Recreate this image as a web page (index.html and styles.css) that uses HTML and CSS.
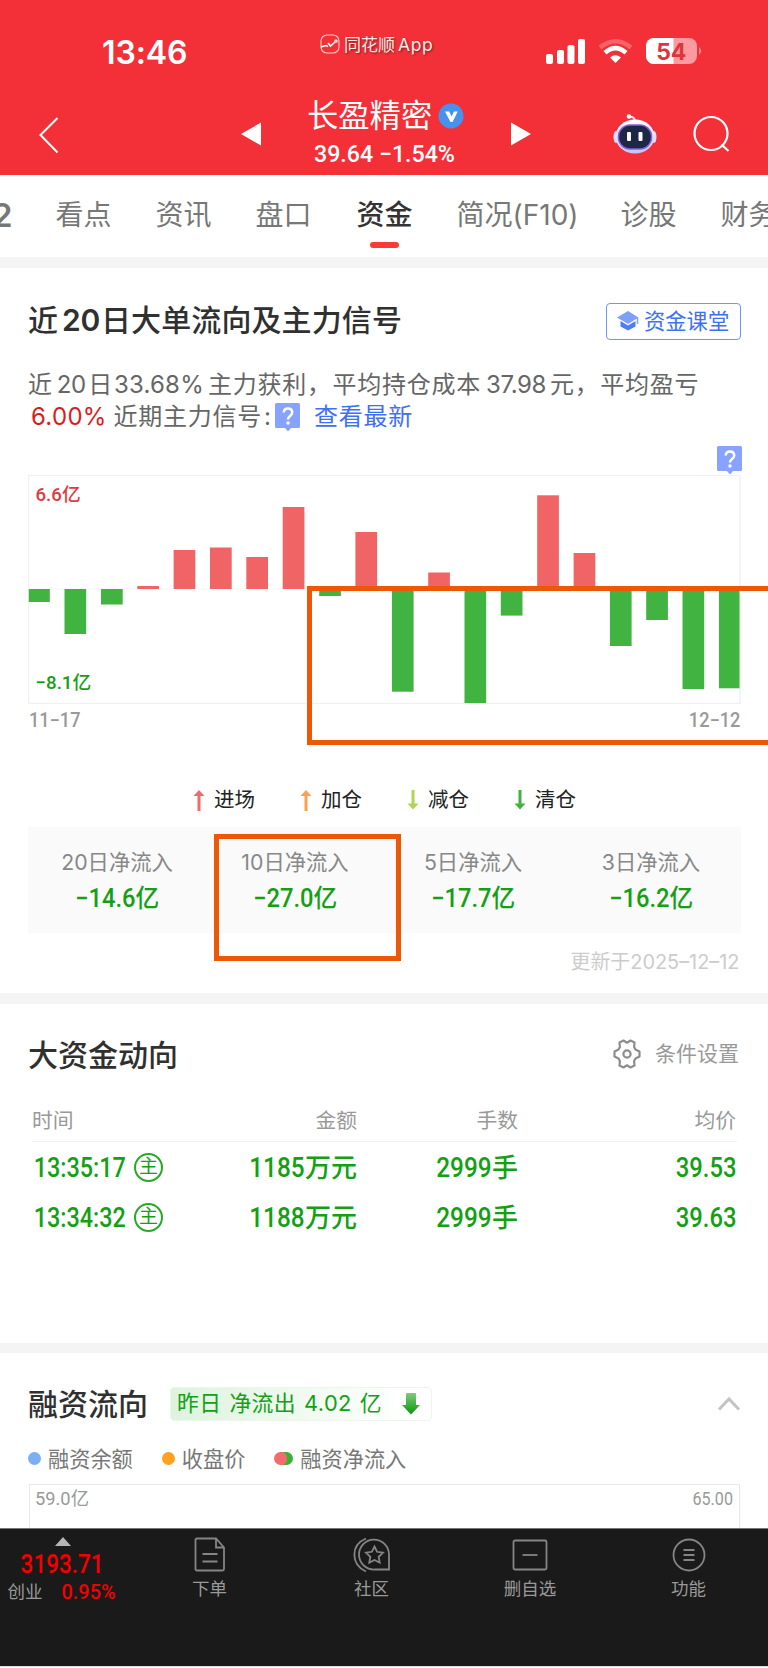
FILE: index.html
```html
<!DOCTYPE html>
<html lang="zh-CN">
<head>
<meta charset="utf-8">
<title>长盈精密 资金</title>
<link rel="stylesheet" href="styles.css">
</head>
<body>
<div class="app">
<header class="top">
  <div class="status">
    <span class="clock">13:46</span>
    <span class="brand">
      <svg width="20" height="20" viewBox="0 0 20 20" fill="none" stroke="#ffc9c4" stroke-width="1.1"><rect x="1" y="1" width="18" height="18" rx="6"/><path d="M1 13l5-1.500 2 1M8 9l2.500 3 4.500-4" stroke="#fff" stroke-width="1.600"/><circle cx="16" cy="7" r="1.300" fill="#fff"/></svg>
      <span class="brand-name">同花顺<span class="brand-app">App</span></span>
    </span>
    <span class="signals">
      <svg width="160" height="30" viewBox="0 0 160 30">
        <g fill="#fff"><rect x="0" y="17" width="7" height="10" rx="2"/><rect x="11" y="13" width="7" height="14" rx="2"/><rect x="21.500" y="8" width="7" height="19" rx="2"/><rect x="32" y="2" width="7" height="25" rx="2"/></g>
        <g fill="none" stroke="#fff" stroke-width="4.500"><path d="M54 10.500Q69.500-2 85 10.500" opacity=".25"/><path d="M59 15.800Q69.500 6.500 80 15.800"/></g>
        <path d="M64 20.500q5.500-4.500 11 0L69.500 26z" fill="#fff"/>
        <rect x="100" y="1" width="51" height="26" rx="8" fill="#fb9a9f"/>
        <path d="M108 1h19.500v26H108a8 8 0 0 1-8-8V9a8 8 0 0 1 8-8z" fill="#fff"/>
        <path d="M153 10q4.500 4 0 8z" fill="#fb8086"/>
        <text x="125.300" y="22.500" text-anchor="middle" class="battery-level">54</text>
      </svg>
    </span>
  </div>
  <div class="nav">
    <svg class="nav-back" width="20" height="38" viewBox="0 0 20 38" fill="none" stroke="#fff" stroke-width="2"><path d="M18.500 2L1.500 19l17 17.500"/></svg>
    <svg class="nav-prev" width="20" height="24" viewBox="0 0 20 24"><path d="M20 .500v23L0 12z" fill="#fff"/></svg>
    <div class="stock">
      <div class="stock-name"><span>长盈精密</span><svg width="26" height="26" viewBox="0 0 26 26"><circle cx="13" cy="13" r="12.500" fill="#4692ef"/><path d="M7 8.500h4.200l2.300 5 2.500-5h3.800L14.500 19h-2z" fill="#fff"/></svg></div>
      <div class="stock-quote"><span>39.64</span><span>−1.54%</span></div>
    </div>
    <svg class="nav-next" width="20" height="24" viewBox="0 0 20 24"><path d="M0 .500v23L20 12z" fill="#fff"/></svg>
    <svg class="nav-robot" width="44" height="40" viewBox="0 0 44 40">
      <defs><linearGradient id="shell" x1="0" y1="0" x2="0" y2="1"><stop offset="0" stop-color="#fff"/><stop offset="1" stop-color="#c5c4f2"/></linearGradient></defs>
      <path d="M16 2.500q6 0 6 5" fill="none" stroke="#f6dfe9" stroke-width="2"/><circle cx="16" cy="2.500" r="2.300" fill="#fff"/>
      <ellipse cx="3" cy="23" rx="2.500" ry="6" fill="#e0defb"/><ellipse cx="41" cy="23" rx="2.500" ry="6" fill="#e0defb"/>
      <ellipse cx="22" cy="22.500" rx="19.500" ry="17" fill="url(#shell)"/>
      <rect x="5.500" y="11" width="33" height="24" rx="11.500" fill="#1d2748" stroke="#8462d5" stroke-width="1.500"/>
      <rect x="14" y="18" width="4" height="9" rx="1" fill="#fff"/><rect x="25.500" y="18" width="4" height="9" rx="1" fill="#fff"/>
    </svg>
    <svg class="nav-search" width="38" height="38" viewBox="0 0 38 38" fill="none" stroke="#fff" stroke-width="2.200"><circle cx="18" cy="18.500" r="16.500"/><path d="M28.500 29.500l7 6.500"/></svg>
  </div>
</header>

<nav class="tabs">
  <span class="tab tab-cut">2</span><span class="tab">看点</span><span class="tab">资讯</span><span class="tab">盘口</span><span class="tab tab-on">资金</span><span class="tab">简况(F10)</span><span class="tab">诊股</span><span class="tab">财务</span>
</nav>

<section class="flow">
  <div class="head">
    <h2 class="flow-title">近<span class="num">20</span>日大单流向及主力信号</h2>
    <a class="lesson"><svg width="22" height="20" viewBox="0 0 22 20"><path d="M11 0L21.500 6.500 11 13 0 6.500z" fill="#7fa0fa"/><path d="M3.500 10l7.500 4.500 7.500-4.500v5.500L11 19.500 3.500 15.500z" fill="#4c7cf6"/><path d="M20.500 7v6" stroke="#7fa0fa" stroke-width="1.500"/></svg><span>资金课堂</span></a>
  </div>
  <div class="summary">
    <div class="summary-a">近<span class="num">20</span>日<span class="num2">33.68%</span>主力获利，<span class="clause">平均持仓成本</span><span class="num3">37.98</span>元，<span class="clause">平均盈亏</span></div>
    <div class="summary-b"><b class="gain">6.00%</b><span class="recent">近期主力信号</span><span class="colon">:</span><svg class="help" width="26" height="29" viewBox="0 0 26 29"><path d="M1.500 0h22q1.500 0 1.500 1.500v22q0 1.500-1.500 1.500H16l-3 3.500-3-3.500H1.500Q0 25 0 23.500v-22Q0 0 1.500 0z" fill="#87a3ff"/><path d="M8.700 9.500q.3-4 4.300-4t4.200 3.700q0 2-2.200 3.800-2 1.500-2 3.500" fill="none" stroke="#fff" stroke-width="2.500"/><circle cx="13" cy="20" r="1.700" fill="#fff"/></svg><a class="latest">查看最新</a></div>
  </div>
  <div class="chart-help"><svg width="26" height="29" viewBox="0 0 26 29"><path d="M1.500 0h22q1.500 0 1.500 1.500v22q0 1.500-1.500 1.500H16l-3 3.500-3-3.500H1.500Q0 25 0 23.500v-22Q0 0 1.500 0z" fill="#87a3ff"/><path d="M8.700 9.500q.3-4 4.300-4t4.200 3.700q0 2-2.200 3.800-2 1.500-2 3.500" fill="none" stroke="#fff" stroke-width="2.500"/><circle cx="13" cy="20" r="1.700" fill="#fff"/></svg></div>
  <div class="chart">
    <svg width="713" height="229" viewBox="0 0 713 229">
      <path d="M.500.500h711.500v228H.500z" fill="none" stroke="#f1f1f1" stroke-width="1.500"/>
      <path d="M0 114h712" stroke="#f5f5f5"/>
      <g fill="#f06466"><rect x="109.300" y="111" width="21.700" height="3"/><rect x="145.600" y="75" width="21.700" height="39"/><rect x="182" y="72.500" width="21.700" height="41.500"/><rect x="218.300" y="82" width="21.700" height="32"/><rect x="254.700" y="32" width="21.700" height="82"/><rect x="327.400" y="57" width="21.700" height="57"/><rect x="400.200" y="97.500" width="21.700" height="16.500"/><rect x="509.200" y="20.300" width="21.700" height="93.700"/><rect x="545.600" y="78" width="21.700" height="36"/></g>
      <g fill="#41b341"><rect x=".800" y="114" width="21" height="13"/><rect x="36.500" y="114" width="21.700" height="45"/><rect x="73" y="114" width="21.700" height="15.500"/><rect x="291.200" y="114" width="21.700" height="7"/><rect x="363.900" y="114" width="21.700" height="102.700"/><rect x="436.500" y="114" width="21.700" height="114"/><rect x="472.800" y="114" width="21.700" height="26.600"/><rect x="581.900" y="114" width="21.700" height="57"/><rect x="618.200" y="114" width="21.700" height="31"/><rect x="654.500" y="114" width="21.700" height="100"/><rect x="691" y="114" width="20.500" height="99.300"/></g>
    </svg>
    <span class="axis axis-max">6.6亿</span>
    <span class="axis axis-min"><i>−</i>8.1亿</span>
    <div class="mark mark-recent"></div>
  </div>
  <div class="dates"><span>11<i>−</i>17</span><span>12<i>−</i>12</span></div>
  <div class="legend">
    <span class="legend-item"><svg width="12" height="21" viewBox="0 0 12 21" fill="#f36a6a"><path d="M6 0l5.500 6h-4v15h-3V6h-4z"/></svg>进场</span>
    <span class="legend-item"><svg width="12" height="21" viewBox="0 0 12 21" fill="#ffa04d"><path d="M6 0l5.500 6h-4v15h-3V6h-4z"/></svg>加仓</span>
    <span class="legend-item"><svg width="12" height="21" viewBox="0 0 12 21" fill="#b4d354"><path d="M6 19.500l5.500-6h-4V0h-3v13.500h-4z"/></svg>减仓</span>
    <span class="legend-item"><svg width="12" height="21" viewBox="0 0 12 21" fill="#44b041"><path d="M6 19.500l5.500-6h-4V0h-3v13.500h-4z"/></svg>清仓</span>
  </div>
  <div class="inflow">
    <div class="inflow-cell"><span class="inflow-label">20日净流入</span><span class="inflow-value"><i>−</i>14.6亿</span></div>
    <div class="inflow-cell"><span class="inflow-label">10日净流入</span><span class="inflow-value"><i>−</i>27.0亿</span></div>
    <div class="inflow-cell"><span class="inflow-label">5日净流入</span><span class="inflow-value"><i>−</i>17.7亿</span></div>
    <div class="inflow-cell"><span class="inflow-label">3日净流入</span><span class="inflow-value"><i>−</i>16.2亿</span></div>
    <div class="mark mark-ten"></div>
  </div>
  <div class="updated">更新于2025–12–12</div>
</section>

<section class="big">
  <div class="head head-big">
    <h2>大资金动向</h2>
    <span class="settings"><svg width="30" height="30" viewBox="0 0 30 30" fill="none" stroke="#8c8c8c" stroke-width="2.200" stroke-linejoin="round"><path transform="rotate(90 15 15)" d="M12.500 2.500h5l2 4 2.500 1.400 4.500-.4 2 4L26.300 15l2.200 3.500-2 4-4.500-.4-2.500 1.400-2 4h-5l-2-4L8 22.100l-4.500.4-2-4L3.700 15 1.500 11.500l2-4 4.500.4 2.500-1.400z"/><circle cx="15" cy="15" r="3.600"/></svg>条件设置</span>
  </div>
  <div class="trades">
    <div class="row row-head"><span>时间</span><span>金额</span><span>手数</span><span>均价</span></div>
    <div class="row"><span class="time"><b>13:35:17</b><em>主</em></span><span><b>1185</b>万元</span><span><b>2999</b>手</span><span class="price"><b>39.53</b></span></div>
    <div class="row"><span class="time"><b>13:34:32</b><em>主</em></span><span><b>1188</b>万元</span><span><b>2999</b>手</span><span class="price"><b>39.63</b></span></div>
  </div>
</section>

<section class="margin">
  <div class="head head-margin">
    <h2>融资流向</h2>
    <span class="outflow"><span class="outflow-text">昨日 净流出 4.02 亿</span><svg width="18" height="22" viewBox="0 0 18 22"><defs><linearGradient id="down" x1="0" y1="0" x2="0" y2="1"><stop offset="0" stop-color="#7fca7f"/><stop offset="1" stop-color="#069906"/></linearGradient></defs><path d="M5 0h8q1 0 1 1v11h4l-9 9.500L0 12h4V1q0-1 1-1z" fill="url(#down)"/></svg></span>
    <svg class="collapse" width="24" height="15" viewBox="0 0 24 15" fill="none" stroke="#c4c4c4" stroke-width="3"><path d="M2 13.500L12 3l10 10.500"/></svg>
  </div>
  <div class="keys">
    <span class="key"><i class="dot blue"></i>融资余额</span>
    <span class="key"><i class="dot orange"></i>收盘价</span>
    <span class="key"><i class="dot pair"></i>融资净流入</span>
  </div>
  <div class="margin-chart"><span>59.0亿</span><span class="right-max">65.00</span></div>
</section>

<footer class="bar">
  <div class="index">
    <svg width="16" height="9" viewBox="0 0 16 9"><path d="M8 0l8 9H0z" fill="#b5b5b5"/></svg>
    <span class="index-value">3193.71</span>
    <span class="index-line"><span>创业</span><b>0.95%</b></span>
  </div>
  <div class="bar-item"><svg width="32" height="36" viewBox="0 0 32 36"><path d="M3 1.500h19l8 9V32q0 1.500-1.500 1.500H3Q1.500 33.500 1.500 32V3Q1.500 1.500 3 1.500zM22 1.500v9h8M8.500 17h15M8.500 24.500h15"/></svg><span>下单</span></div>
  <div class="bar-item"><svg width="38" height="36" viewBox="0 0 38 36"><path d="M36 32.500H22A15 15 0 1 1 36 17.500zM13 1.500C-2.500 8-2.500 27 13 34.500M21.500 9.500l2.600 5.300 5.900.9-4.300 4.200 1 5.800-5.200-2.800-5.200 2.800 1-5.800-4.300-4.200 5.900-.9z"/></svg><span>社区</span></div>
  <div class="bar-item"><svg width="36" height="36" viewBox="0 0 36 36"><rect x="1.500" y="3.500" width="33" height="29" rx="1.500"/><path d="M10.500 18h15"/></svg><span>删自选</span></div>
  <div class="bar-item"><svg width="34" height="36" viewBox="0 0 34 36"><circle cx="17" cy="18" r="15.500"/><path d="M11.500 13h11M11.500 18h11M11.500 23h11"/></svg><span>功能</span></div>
</footer>
</div>
</body>
</html>
```
FILE: styles.css
```css
* { box-sizing: border-box; }
body {
  margin: 0;
  background: #fff;
  font-family: Inter, "Noto Sans CJK SC", sans-serif;
  color: #333;
}
svg { display: block; flex: none; }
i, em { font-style: normal; }
h2 { margin: 0; font-size: 30px; font-weight: 500; line-height: 36px; color: #303030; }
.app { width: 768px; height: 1668px; overflow: hidden; display: flex; flex-direction: column; }
.app > * { flex: none; }

/* header */
.top { height: 174.500px; background: #f33038; color: #fff; }
.status { height: 92px; display: grid; grid-template-columns: 102px 218px 226px 1fr; align-items: start; }
.clock { grid-column: 2; margin-top: 33px; font-size: 32px; font-weight: 600; line-height: 39px; letter-spacing: -.1px; }
.brand { display: flex; gap: 4px; margin-top: 34px; }
.brand-name { font-size: 17px; line-height: 22px; color: #ffe9e7; text-shadow: 1px 1px 2px #7c1d1d; white-space: nowrap; }
.brand-app { margin-left: 3px; letter-spacing: .6px; font-size: 17.500px; }
.signals { margin-top: 37px; }
.battery-level { font: 700 23px Inter, sans-serif; fill: #e0343c; }
.nav { height: 82px; display: grid; grid-template-columns: 39px 202px 66px 204px 102px 80px 1fr; align-items: start; }
.nav-back { grid-column: 2; margin-top: 24px; }
.nav-prev, .nav-next { margin-top: 30px; }
.nav-robot { margin-top: 22px; }
.nav-search { margin-top: 23px; }
.stock-name { display: flex; gap: 5.500px; align-items: center; height: 48px; font-size: 31.300px; line-height: 48px; white-space: nowrap; }
.stock-quote { display: flex; gap: 6px; margin-left: 7px; font: 500 24px/28px Roboto, sans-serif; transform: scaleX(.965); transform-origin: 0 50%; }

/* tabs */
.tabs { height: 93.500px; border-bottom: 11px solid #f4f4f4; padding-top: 21.500px; display: grid; grid-template-columns: 55.500px 100px 100px 101px 100px 164px 100px 47.500px; }
.tab { font-size: 28px; line-height: 38px; color: #777; white-space: nowrap; }
.tab-cut { font-size: 33px; font-weight: 600; margin-left: -8px; }
.tab-on { color: #333; font-weight: 500; position: relative; }
.tab-on::after { content: ""; position: absolute; left: 13.500px; top: 46px; width: 29px; height: 6px; border-radius: 3px; background: #fa3a33; }

/* large order flow */
.flow { height: 735.500px; border-bottom: 11px solid #f4f4f4; padding: 33px 27px 0 28px; }
.head { display: flex; justify-content: space-between; align-items: center; height: 38px; }
.flow-title { white-space: nowrap; letter-spacing: .1px; }
.flow-title .num { margin: 0 1px 0 4px; font-weight: 600; letter-spacing: -.3px; }
.lesson { display: flex; align-items: center; gap: 5px; width: 135px; height: 37px; margin-top: 2px; padding-left: 10px; border: 1.500px solid #7095ff; border-radius: 4px; font-size: 21.300px; line-height: 32px; color: #3e70f5; white-space: nowrap; }
.lesson span { margin-top: -1px; }
.summary { margin-top: 29px; color: #666; font-size: 24px; line-height: 32px; letter-spacing: .75px; white-space: nowrap; }
.summary .num { margin: 0 2.500px 0 4px; letter-spacing: -.4px; }
.summary .num2 { margin: 0 4px 0 1px; letter-spacing: .2px; }
.summary .num3 { margin: 0 4px 0 5px; letter-spacing: -.4px; }
.clause { margin-left: .900px; }
.summary-a { height: 33px; line-height: 33px; }
.summary-b { height: 32px; display: flex; align-items: center; }
.gain { width: 85.500px; padding-left: 3px; font-weight: 400; color: #d71d22; letter-spacing: .3px; }
.recent { width: 150.500px; }
.colon { width: 11px; }
.latest { margin-left: 13px; color: #3e70f5; }
.chart-help { display: flex; justify-content: flex-end; height: 29px; margin: 13px -2px 0 0; }
.chart { position: relative; height: 229px; }
.axis { position: absolute; left: 7.500px; font: 500 18.700px/22px Roboto, "Noto Sans CJK SC", sans-serif; }
.axis-max { top: 9px; color: #e4393c; }
.axis-min { top: 197px; color: #14a014; }
.mark { position: absolute; border: 5px solid #ec5807; }
.mark-recent { left: 279px; top: 110.500px; width: 480px; height: 159px; border-right: 0; }
.dates { display: flex; justify-content: space-between; margin: 4px 1px 0; height: 25px; font: 500 19.500px/26px Roboto, sans-serif; color: #999; }
.dates span { transform: scaleX(.93); transform-origin: 0 50%; }
.dates span:last-child { transform-origin: 100% 50%; }
.legend { display: flex; gap: 45px; height: 32px; margin: 51px 0 0 165px; font-size: 20.500px; line-height: 32px; }
.legend-item { display: flex; align-items: center; gap: 9px; color: #222; white-space: nowrap; }
.inflow { position: relative; display: grid; grid-template-columns: repeat(4, 178px); height: 106px; margin-top: 11px; background: #fafafa; }
.inflow-cell { display: flex; flex-direction: column; align-items: center; padding-top: 21px; }
.inflow-label { font-size: 21.300px; line-height: 28px; color: #888; }
.inflow-value { margin-top: 6px; font: 500 25.500px/32px Roboto, "Noto Sans CJK SC", sans-serif; color: #14a014; transform: scaleX(.93); }
.mark-ten { left: 186px; top: 7px; width: 186.500px; height: 127px; }
.updated { margin-top: 15px; text-align: right; font-size: 19.900px; line-height: 28px; color: #ccc; padding-right: 1.500px; }

/* big money */
.big { height: 349px; border-bottom: 10px solid #f4f4f4; padding: 32px 27px 0 28px; }
.settings { display: flex; align-items: center; gap: 13px; font-size: 21px; line-height: 30px; color: #999; padding-right: 2px; margin-top: -1px; }
.trades { margin: 30px 4px 0 4px; }
.row { display: grid; grid-template-columns: 160px 165px 161px 218px; height: 50px; line-height: 51px; font-family: Roboto, "Noto Sans CJK SC", sans-serif; font-size: 26px; font-weight: 500; color: #14a014; white-space: nowrap; }
.row > span { text-align: right; }
.row > .time, .row > span:first-child { text-align: left; }
.row b { display: inline-block; font-weight: 500; font-size: 28px; transform: scaleX(.87); transform-origin: 100% 50%; }
.row .price b { transform: scaleX(.85); }
.row-head { height: 38px; line-height: 26px; border-bottom: 1.500px solid #f2f2f2; padding-top: 4px; font-size: 20.800px; font-weight: 400; color: #999; }
.time { display: flex; align-items: center; }
.row .time b { width: 102px; transform: scaleX(.835); transform-origin: 0 50%; padding-left: 2px; }
.time em { width: 29px; height: 29px; border: 2px solid #28a828; border-radius: 50%; font-size: 19px; line-height: 24px; text-align: center; font-weight: 400; }

/* margin financing */
.margin { height: 175px; padding: 32px 27px 0 28px; overflow: hidden; }
.head-margin { justify-content: flex-start; }
.outflow { display: flex; align-items: center; justify-content: space-between; width: 262px; height: 34px; margin-left: 22px; padding: 0 11px 0 6px; border: 1px solid #ecf7ec; border-radius: 4px; background: linear-gradient(90deg, #def3de, #fff 90%); color: #14a014; font-size: 21.800px; line-height: 30px; letter-spacing: .4px; word-spacing: 1.500px; white-space: nowrap; }
.outflow-text { margin-top: -1px; }
.collapse { margin-left: auto; }
.keys { display: flex; gap: 29px; margin-top: 22px; height: 28px; font-size: 21.200px; line-height: 28px; color: #777; }
.key { display: flex; align-items: center; gap: 7px; white-space: nowrap; }
.dot { width: 13px; height: 13px; border-radius: 50%; }
.blue { background: #7baff3; }
.orange { background: #ffa01f; }
.pair { width: 19px; border-radius: 7px; background: radial-gradient(circle at 6.500px 6.500px, #f26b6d 6.500px, #35b135 7px); }
.margin-chart { display: flex; justify-content: space-between; height: 60px; margin: 11px 1.500px 0 1px; padding: 2px 6px 0 5px; border: 1.500px solid #e8e8e8; font: 400 18.300px/24px Roboto, "Noto Sans CJK SC", sans-serif; color: #999; }
.right-max { transform: scaleX(.88); transform-origin: 100% 50%; }

/* bottom bar */
.bar { height: 139.500px; background: #1a1a1a; display: grid; grid-template-columns: 130px 159px 165px 152px 1fr; align-items: start; border-top: 1px solid #777; border-bottom: 1px solid #ddd; }
.index { display: flex; flex-direction: column; width: 125px; align-items: center; padding-top: 8px; }
.index-value { margin-top: 5px; font: 500 25px/28px Roboto, sans-serif; color: #f30000; transform: scaleX(.9); }
.index-line { display: flex; gap: 18px; margin-top: 0; line-height: 26px; font-size: 17.500px; color: #999; white-space: nowrap; }
.index-line b { font: 500 21px/26px Roboto, sans-serif; color: #f30000; transform: scaleX(.95); }
.bar-item { display: flex; flex-direction: column; align-items: center; padding-top: 8px; font-size: 17.500px; line-height: 24px; color: #999; gap: 4px; }
.bar-item svg { fill: none; stroke: #858585; stroke-width: 1.800; }
.bar-item:last-child { padding-left: 3px; }
```
